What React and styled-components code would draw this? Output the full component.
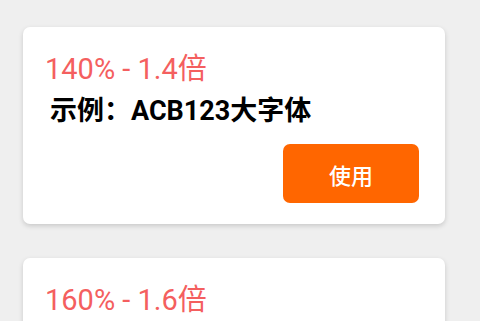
import React from 'react';
import styled, { createGlobalStyle } from 'styled-components';

const GlobalStyle = createGlobalStyle`
  html, body {
    margin: 0;
    padding: 0;
    background: #efefef;
    overflow: hidden;
  }
  body {
    font-family: Roboto, "Noto Sans CJK SC", sans-serif;
  }
`;

const List = styled.div`
  display: flex;
  flex-direction: column;
  gap: 34px;
  margin-top: -204px;
  padding-left: 23px;
`;

const Card = styled.div`
  box-sizing: border-box;
  width: 422px;
  height: 197px;
  background: #ffffff;
  border-radius: 7px;
  box-shadow: 0 2px 5px rgba(0, 0, 0, 0.16);
  padding: 25px 26px 21px 22px;
  display: flex;
  flex-direction: column;
`;

const Title = styled.div`
  font-size: 29px;
  line-height: 34px;
  font-weight: 400;
  color: #f45f5f;
`;

const Sample = styled.div`
  margin-top: 8px;
  padding-left: 5px;
  font-size: 27px;
  line-height: 34px;
  font-weight: 700;
  color: #000000;
`;

const Actions = styled.div`
  margin-top: auto;
  display: flex;
  justify-content: flex-end;
`;

const UseButton = styled.button`
  width: 136px;
  height: 59px;
  border: none;
  border-radius: 7px;
  background: #ff6600;
  color: #ffffff;
  font-family: Roboto, "Noto Sans CJK SC", sans-serif;
  font-size: 22px;
  font-weight: 500;
  padding: 0;
`;

const sizes = [
  { pct: 120, scale: '1.2' },
  { pct: 140, scale: '1.4' },
  { pct: 160, scale: '1.6' },
];

const FontCard = ({ pct, scale }) => (
  <Card>
    <Title>{pct}% - {scale}倍</Title>
    <Sample>示例：ACB123大字体</Sample>
    <Actions>
      <UseButton>使用</UseButton>
    </Actions>
  </Card>
);

const App = () => (
  <>
    <GlobalStyle />
    <List>
      {sizes.map((s) => (
        <FontCard key={s.pct} pct={s.pct} scale={s.scale} />
      ))}
    </List>
  </>
);

export default App;
